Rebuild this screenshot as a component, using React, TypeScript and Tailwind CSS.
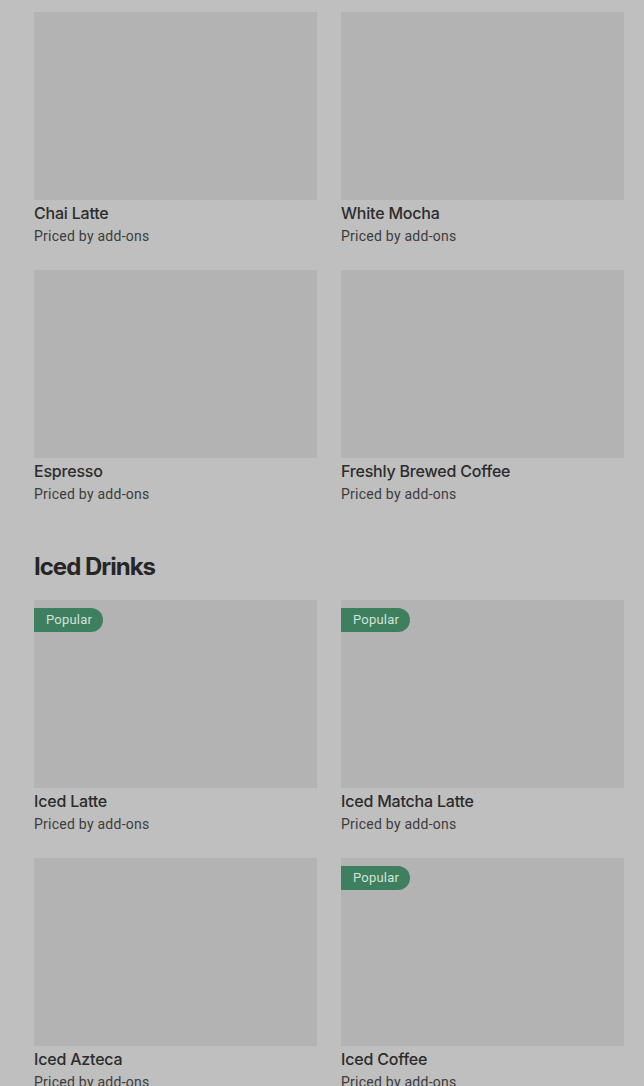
import React from 'react';

type Item = { name: string; popular?: boolean };

const hotTail: Item[] = [
  { name: 'Chai Latte' },
  { name: 'White Mocha' },
  { name: 'Espresso' },
  { name: 'Freshly Brewed Coffee' },
];

const iced: Item[] = [
  { name: 'Iced Latte', popular: true },
  { name: 'Iced Matcha Latte', popular: true },
  { name: 'Iced Azteca' },
  { name: 'Iced Coffee', popular: true },
];

const inter = { fontFamily: 'Inter, "Liberation Sans", sans-serif' };

function ItemCard({ item }: { item: Item }) {
  return (
    <div className="flex flex-col">
      <div className="relative h-[188px] bg-[#b3b3b3]">
        {item.popular && (
          <span className="absolute left-0 top-[8px] flex h-[24px] items-center rounded-r-full bg-[#3e7f5f] pl-[12px] pr-[11px] text-[13px] tracking-[0.2px] text-[#d3e3d9]">
            Popular
          </span>
        )}
      </div>
      <p className="mt-[3px] text-[16px] font-medium leading-5 tracking-[-0.2px] text-[#2c2c2c]" style={inter}>
        {item.name}
      </p>
      <p className="mt-[3px] text-[14px] leading-5 tracking-[0.25px] text-[#3c3c3c]">Priced by add-ons</p>
    </div>
  );
}

export default function App() {
  return (
    <div
      className="min-h-[1086px] overflow-hidden bg-[#bfbfbf] pl-[34px] pr-[20px] pt-[12px]"
      style={{ fontFamily: 'Roboto, "Liberation Sans", sans-serif' }}
    >
      <div className="grid grid-cols-2 gap-x-[24px] gap-y-[24px]">
        {hotTail.map(i => <ItemCard key={i.name} item={i} />)}
      </div>

      <h2 className="mt-[47px] mb-[17px] text-[24px] font-bold leading-8 tracking-[-1px] text-[#262626]" style={inter}>
        Iced Drinks
      </h2>

      <div className="grid grid-cols-2 gap-x-[24px] gap-y-[24px]">
        {iced.map(i => <ItemCard key={i.name} item={i} />)}
      </div>
    </div>
  );
}
